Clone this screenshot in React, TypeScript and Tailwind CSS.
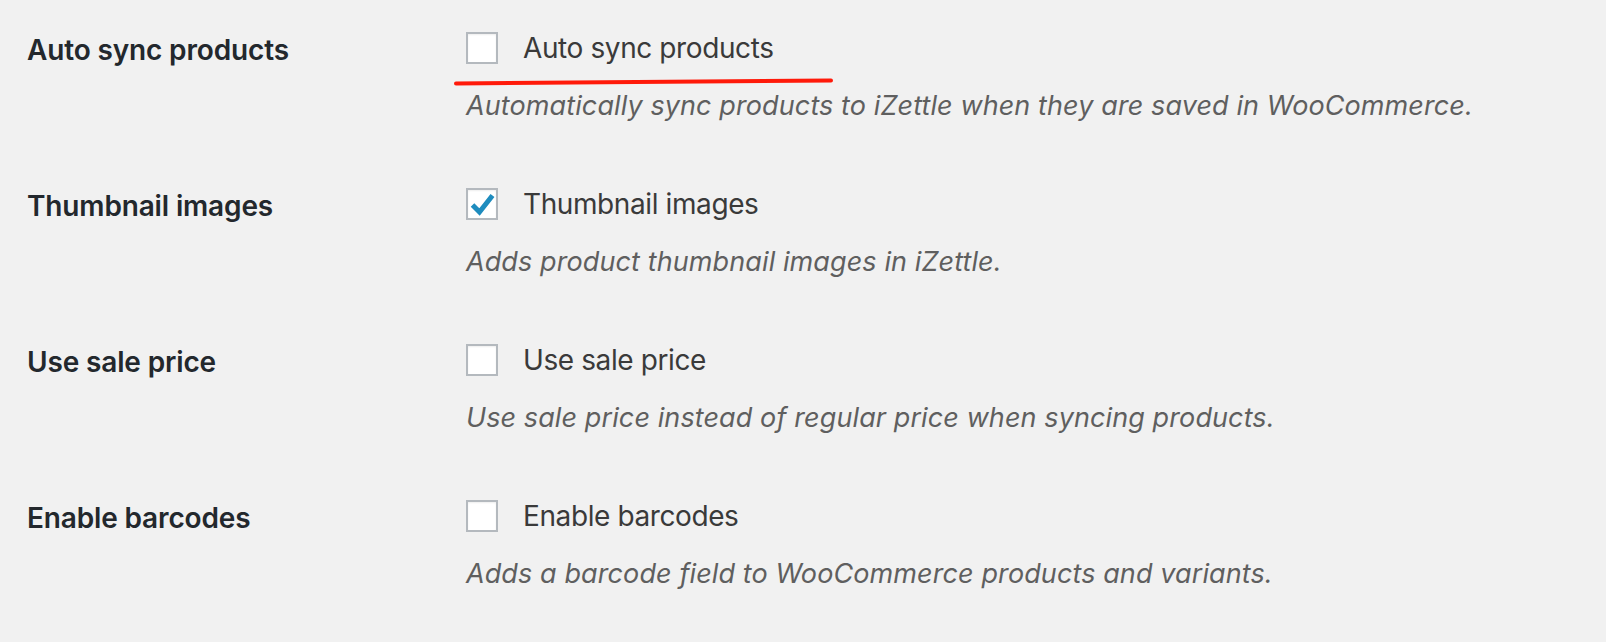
import React from "react";

const rows = [
  {
    title: "Auto sync products",
    desc: "Automatically sync products to iZettle when they are saved in WooCommerce.",
    checked: false,
  },
  {
    title: "Thumbnail images",
    desc: "Adds product thumbnail images in iZettle.",
    checked: true,
  },
  {
    title: "Use sale price",
    desc: "Use sale price instead of regular price when syncing products.",
    checked: false,
  },
  {
    title: "Enable barcodes",
    desc: "Adds a barcode field to WooCommerce products and variants.",
    checked: false,
  },
];

function Checkbox({ checked }: { checked: boolean }) {
  return (
    <span className="flex h-[32px] w-[32px] shrink-0 items-center justify-center border-2 border-[#b4b9be] bg-white shadow-[inset_0_1px_2px_rgba(0,0,0,0.07)]">
      {checked && (
        <svg width="32" height="32" viewBox="0 0 32 32" className="-m-[2px]">
          <path
            d="M6.5 17 L13.5 24 L26.5 7.5"
            fill="none"
            stroke="#1e8cbe"
            strokeWidth="5"
            strokeLinecap="butt"
            strokeLinejoin="miter"
          />
        </svg>
      )}
    </span>
  );
}

export default function App() {
  return (
    <div
      className="relative min-h-[642px] w-full bg-[#f1f1f1] pt-[32px]"
      style={{ fontFamily: "Inter, 'Noto Sans', sans-serif" }}
    >
      {rows.map((row) => (
        <div key={row.title} className="flex h-[156px]">
          <div className="mt-[2px] w-[466px] shrink-0 pl-[27px] text-[28px] font-semibold leading-[32px] tracking-[-0.15px] text-[#23282d]">
            {row.title}
          </div>
          <div className="flex flex-col">
            <label className="flex h-[32px] items-center gap-[25px] text-[28px] leading-[32px] tracking-[-0.4px] text-[#3a3a3a]">
              <Checkbox checked={row.checked} />
              <span>{row.title}</span>
            </label>
            <p className="mt-[24px] text-[27px] italic leading-[36px] tracking-[0.1px] text-[#5f5f5f]">
              {row.desc}
            </p>
          </div>
        </div>
      ))}

      {/* red marker underline */}
      <svg
        className="pointer-events-none absolute left-0 top-0"
        width="1606"
        height="642"
      >
        <path
          d="M456 83.5 C 600 82.5, 720 81.5, 831 80.5"
          fill="none"
          stroke="#ff1a0a"
          strokeWidth="4"
          strokeLinecap="round"
        />
      </svg>
    </div>
  );
}
